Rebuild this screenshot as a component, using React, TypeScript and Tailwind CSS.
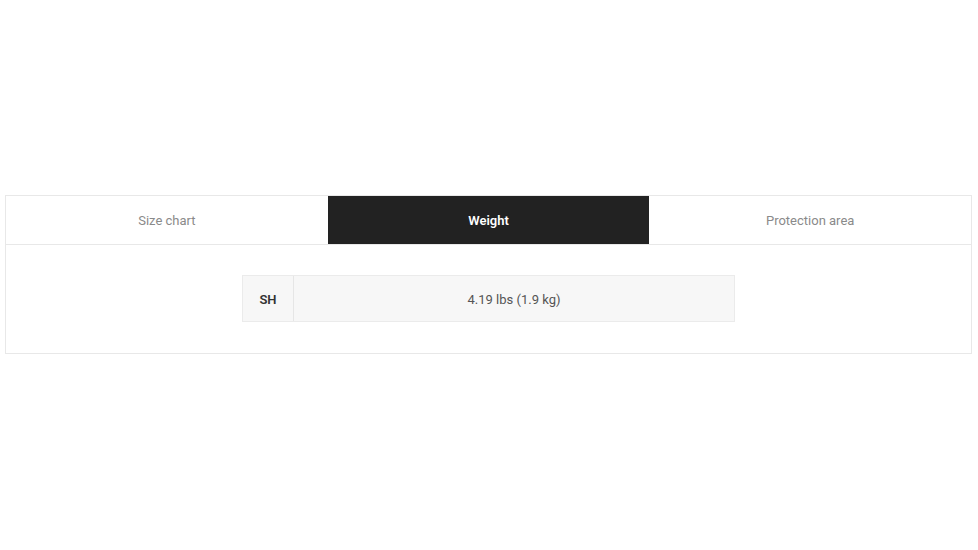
import React from 'react';

const tabs = ['Size chart', 'Weight', 'Protection area'];

export default function App() {
  const [active, setActive] = React.useState(1);

  return (
    <div className="w-[978px] h-[550px] bg-white pt-[195px] px-[5px]" style={{ fontFamily: 'Roboto, "Noto Sans", sans-serif' }}>
      <div className="w-[967px] border border-[#e8e8e8]">
        {/* Tabs */}
        <div className="flex border-b border-[#e8e8e8]">
          {tabs.map((tab, index) => (
            <button
              key={tab}
              onClick={() => setActive(index)}
              className={`flex-1 h-[48px] pt-[2px] text-[13px] flex items-center justify-center ${active === index
                ? 'bg-[#222222] text-white font-semibold'
                : 'bg-white text-[#8a8a8a]'
                }`}
            >
              {tab}
            </button>
          ))}
        </div>

        {/* Weight table */}
        <div className="flex justify-center pt-[30px] pb-[31px]">
          <div className="flex w-[493px] h-[47px] border border-[#ebebeb] bg-[#f7f7f7] text-[13px]">
            <div className="w-[51px] pt-[2px] border-r border-[#e6e6e6] flex items-center justify-center font-semibold text-[#333333]">SH</div>
            <div className="flex-1 pt-[2px] flex items-center justify-center text-[#555555]">4.19 lbs (1.9 kg)</div>
          </div>
        </div>
      </div>
    </div>
  );
}
